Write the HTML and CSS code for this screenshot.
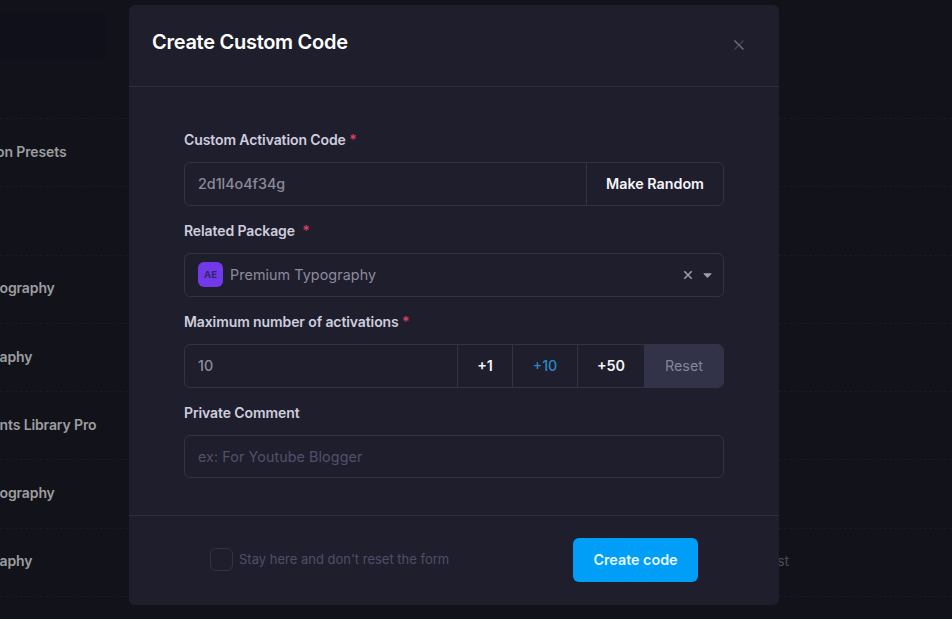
FILE: index.html
```html
<!DOCTYPE html>
<html lang="en">
<head>
<meta charset="utf-8">
<title>Create Custom Code</title>
<link rel="stylesheet" href="styles.css">
</head>
<body>
<main class="page">
  <div class="toolbar"><div class="search"></div></div>
  <div class="row"><span class="name cut">on Presets</span></div>
  <div class="row"></div>
  <div class="row"><span class="name">ography</span></div>
  <div class="row"><span class="name">aphy</span></div>
  <div class="row"><span class="name">nts Library Pro</span></div>
  <div class="row"><span class="name">ography</span></div>
  <div class="row"><span class="name">aphy</span><span class="note">st</span></div>
  <div class="row"></div>
</main>
<div class="overlay">
  <section class="modal">
    <header class="modal-header">
      <h2>Create Custom Code</h2>
      <svg class="close" width="12" height="12" viewBox="0 0 12 12"><path class="slash-back" d="M1.5 10.5 10.5 1.5"/><path class="slash" d="M1.5 1.5 10.5 10.5"/></svg>
    </header>
    <form class="modal-body">
      <label class="label">Custom Activation Code <span class="req">*</span></label>
      <div class="control">
        <span class="value code">2d1l4o4f34g</span>
        <span class="addon random">Make Random</span>
      </div>
      <label class="label">Related Package <span class="req gap">*</span></label>
      <div class="control">
        <span class="value package"><span class="chip">AE</span><span class="package-name">Premium Typography</span></span>
        <svg class="clear" width="10" height="10" viewBox="0 0 10 10"><path d="M1.3 1.3 8.7 8.7M8.7 1.3 1.3 8.7"/></svg>
        <svg class="caret" width="9" height="5" viewBox="0 0 9 5"><path d="M.8.2h7.4q.6.3.2.9L5 4.6q-.5.4-1 0L.6 1.1Q.2.5.8.2z"/></svg>
      </div>
      <label class="label">Maximum number of activations <span class="req">*</span></label>
      <div class="control">
        <span class="value">10</span>
        <span class="addon one">+1</span>
        <span class="addon ten">+10</span>
        <span class="addon fifty">+50</span>
        <span class="addon reset">Reset</span>
      </div>
      <label class="label">Private Comment</label>
      <div class="control last"><span class="value placeholder">ex: For Youtube Blogger</span></div>
    </form>
    <footer class="modal-footer">
      <span class="check"><span class="box"></span><span class="check-text">Stay here and don't reset the form</span></span>
      <span class="submit">Create code</span>
    </footer>
  </section>
</div>
</body>
</html>
```
FILE: styles.css
```css
* { box-sizing: border-box; }
body {
  margin: 0;
  height: 619px;
  overflow: hidden;
  background: #12121b;
  font-family: Inter, "Liberation Sans", sans-serif;
  font-size: 14.3px;
  white-space: nowrap;
}
.page { height: 619px; overflow: hidden; }
.toolbar { height: 118px; padding-top: 13px; }
.search { width: 106px; height: 46px; background: #10101a; border-radius: 0 6px 6px 0; }
.row {
  display: flex;
  align-items: center;
  justify-content: space-between;
  height: 68.3px;
  padding: 0 163px 3px 0;
  border-top: 1px dashed #1a1a24;
  color: #9d9d9f;
  font-size: 14px;
  font-weight: 600;
  letter-spacing: -0.12px;
}
.name { margin-left: -0.5px; }
.cut { margin-left: -4px; }
.note { color: #4b4b53; font-weight: 400; }
.overlay { position: absolute; inset: 0; padding: 5px 0 0 129px; }
.modal {
  width: 650px;
  height: 600px;
  background: #1f1e2d;
  border-radius: 6px;
  overflow: hidden;
}
.modal-header {
  display: flex;
  justify-content: space-between;
  height: 82px;
  padding: 24px 34px 0 23px;
  border-bottom: 1px solid #2e2d3e;
}
h2 { margin: 0; color: #fff; font-size: 20px; line-height: 26px; font-weight: 600; letter-spacing: -0.28px; }
.close { margin-top: 10px; fill: none; stroke-width: 1.5; }
.slash { stroke: #6d6c86; }
.slash-back { stroke: #424155; }
.modal-body { height: 428px; padding: 42px 55px 0; }
.label {
  display: block;
  height: 33px;
  line-height: 22px;
  color: #cdcdde;
  font-size: 14px;
  font-weight: 600;
  letter-spacing: -0.1px;
}
.req { color: #d9405f; }
.gap { margin-left: 4px; }
.control {
  display: flex;
  align-items: center;
  height: 44px;
  margin-bottom: 14px;
  border: 1px solid #343345;
  border-radius: 6px;
  overflow: hidden;
}
.control.last { height: 43px; }
.value { flex: 1; padding: 0 0 1px 13px; color: #8c8b9b; font-weight: 500; }
.package { display: flex; align-items: center; gap: 7px; font-weight: 400; letter-spacing: 0.09px; }
.chip {
  width: 25px;
  height: 25px;
  border-radius: 6px;
  background: #7239ea;
  color: #332466;
  font-size: 9.5px;
  line-height: 25px;
  font-weight: 700;
  text-align: center;
}
.clear { margin-right: 10px; fill: none; stroke: #9b9aa9; stroke-width: 1.6; }
.caret { margin-right: 11px; fill: #a09fab; }
.addon {
  align-self: stretch;
  line-height: 42px;
  border-left: 1px solid #343345;
  color: #f4f4fa;
  font-weight: 600;
  text-align: center;
}
.random { width: 137px; }
.one { width: 55px; }
.ten { width: 65px; color: #2b86c9; font-weight: 500; }
.fifty { width: 67px; }
.reset {
  width: 80px;
  margin: -1px -1px -1px 0;
  border: 0;
  background: #323248;
  color: #85849a;
  line-height: 44px;
  font-weight: 400;
}
.placeholder { padding-bottom: 0; color: #515069; font-weight: 400; letter-spacing: 0.09px; }
.modal-footer {
  display: flex;
  align-items: center;
  justify-content: space-between;
  height: 90px;
  padding: 0 81px 2px;
  border-top: 1px solid #2e2d3e;
}
.check { display: flex; align-items: center; gap: 6px; color: #4f4e66; font-size: 13px; }
.check-text { padding-bottom: 1px; }
.box { width: 23px; height: 23px; border: 1px solid #343345; border-radius: 6px; }
.submit {
  width: 125px;
  height: 44px;
  border-radius: 6px;
  background: #009ef7;
  color: #e4f6ff;
  line-height: 44px;
  font-weight: 600;
  text-align: center;
}
```
